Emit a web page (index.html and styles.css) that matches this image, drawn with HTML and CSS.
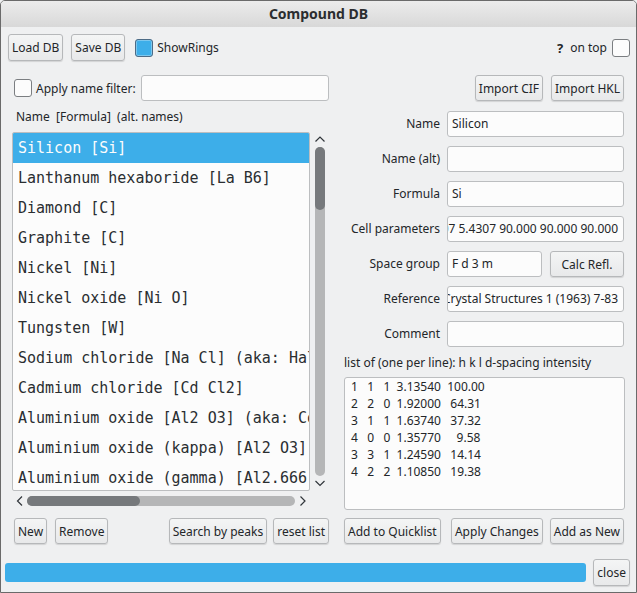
FILE: index.html
```html
<!DOCTYPE html>
<html>
<head>
<meta charset="utf-8">
<title>Compound DB</title>
<link rel="stylesheet" href="styles.css">
</head>
<body>
<div class="window">
  <div class="titlebar">Compound DB</div>

  <div class="toolbar">
    <button class="btn tall">Load DB</button>
    <button class="btn tall save">Save DB</button>
    <label class="check rings"><span class="box checked"></span>ShowRings</label>
    <span class="spacer"></span>
    <span class="help">?</span>
    <label class="check ontop">on top<span class="box"></span></label>
  </div>

  <div class="main">
    <div class="left">
      <div class="filter-row">
        <label class="check filter"><span class="box"></span>Apply name filter:</label>
        <div class="field filter-input"></div>
      </div>
      <div class="list-head">Name&nbsp; [Formula]&nbsp; (alt. names)</div>
      <div class="list-area">
        <div class="listbox">
          <div class="item selected">Silicon [Si]</div>
          <div class="item">Lanthanum hexaboride [La B6]</div>
          <div class="item">Diamond [C]</div>
          <div class="item">Graphite [C]</div>
          <div class="item">Nickel [Ni]</div>
          <div class="item">Nickel oxide [Ni O]</div>
          <div class="item">Tungsten [W]</div>
          <div class="item">Sodium chloride [Na Cl] (aka: Halite)</div>
          <div class="item">Cadmium chloride [Cd Cl2]</div>
          <div class="item">Aluminium oxide [Al2 O3] (aka: Corundum)</div>
          <div class="item">Aluminium oxide (kappa) [Al2 O3]</div>
          <div class="item">Aluminium oxide (gamma) [Al2.666 O4]</div>
        </div>
        <div class="vscroll">
          <svg class="chev" width="12" height="14" viewBox="0 0 12 14"><polyline points="1.5,9.5 6,5 10.5,9.5" fill="none" stroke="#31363b" stroke-width="1.2"/></svg>
          <div class="vtrack"><div class="vthumb"></div></div>
          <svg class="chev" width="12" height="14" viewBox="0 0 12 14"><polyline points="1.5,5 6,9.5 10.5,5" fill="none" stroke="#31363b" stroke-width="1.2"/></svg>
        </div>
      </div>
      <div class="hscroll">
        <svg class="hchev" width="15" height="14" viewBox="0 0 15 14"><polyline points="10,2.5 5.5,7 10,11.5" fill="none" stroke="#31363b" stroke-width="1.2"/></svg>
        <div class="htrack"><div class="hthumb"></div></div>
        <svg class="hchev" width="15" height="14" viewBox="0 0 15 14"><polyline points="5.5,2.5 10,7 5.5,11.5" fill="none" stroke="#31363b" stroke-width="1.2"/></svg>
      </div>
      <div class="btn-row">
        <button class="btn first">New</button>
        <button class="btn remove">Remove</button>
        <span class="spacer"></span>
        <button class="btn">Search by peaks</button>
        <button class="btn reset">reset list</button>
      </div>
    </div>

    <div class="right">
      <div class="import-row">
        <button class="btn">Import CIF</button>
        <button class="btn hkl-btn">Import HKL</button>
      </div>
      <div class="form">
        <div class="form-row"><span class="lbl">Name</span><div class="field">Silicon</div></div>
        <div class="form-row"><span class="lbl">Name (alt)</span><div class="field"></div></div>
        <div class="form-row"><span class="lbl">Formula</span><div class="field">Si</div></div>
        <div class="form-row"><span class="lbl">Cell parameters</span><div class="field tail"><span>5.4307 5.4307 5.4307 90.000 90.000 90.000</span></div></div>
        <div class="form-row"><span class="lbl">Space group</span><div class="split"><div class="field sg">F d 3 m</div><button class="btn calc">Calc Refl.</button></div></div>
        <div class="form-row"><span class="lbl">Reference</span><div class="field tail"><span>Wyckoff, Crystal Structures 1 (1963) 7-83</span></div></div>
        <div class="form-row"><span class="lbl">Comment</span><div class="field"></div></div>
      </div>
      <div class="hkl-label">list of (one per line): h k l d-spacing intensity</div>
      <div class="hkl"><div class="line">1   1   1  3.13540  100.00</div><div class="line">2   2   0  1.92000   64.31</div><div class="line">3   1   1  1.63740   37.32</div><div class="line">4   0   0  1.35770     9.58</div><div class="line">3   3   1  1.24590   14.14</div><div class="line">4   2   2  1.10850   19.38</div></div>
      <div class="btn-row">
        <button class="btn quick">Add to Quicklist</button>
        <button class="btn apply">Apply Changes</button>
        <button class="btn addnew">Add as New</button>
      </div>
    </div>
  </div>

  <div class="statusbar">
    <div class="progress"></div>
    <button class="btn close">close</button>
  </div>
</div>
</body>
</html>
```
FILE: styles.css
```css
html, body {
  margin: 0;
  padding: 0;
  background: #eff0f1;
}

body {
  font-family: "Noto Sans", "Open Sans", sans-serif;
  font-size: 12px;
  color: #232629;
}

.window {
  width: 637px;
  height: 593px;
  box-sizing: border-box;
  border: 1px solid #6a6a6a;
  border-radius: 5px 5px 0 0;
  background: #eff0f1;
  display: flex;
  flex-direction: column;
  overflow: hidden;
}

.titlebar {
  height: 26px;
  line-height: 26px;
  text-align: center;
  font-weight: bold;
  font-size: 14px;
  color: #2b2d2f;
  background: linear-gradient(#ececec, #d8d8d8);
}

.btn {
  font-family: inherit;
  font-size: 12px;
  color: #232629;
  height: 26px;
  box-sizing: border-box;
  padding: 0 3px;
  margin: 0;
  border: 1px solid #b6b8ba;
  border-radius: 3px;
  background: linear-gradient(#f4f5f5, #e8e9ea);
  box-shadow: 0 1px 1px rgba(0, 0, 0, 0.12);
  white-space: nowrap;
}

.btn.tall {
  height: 27px;
}

.spacer {
  flex: 1;
}

.toolbar {
  margin-top: 7px;
  height: 27px;
  padding: 0 6px 0 7px;
  display: flex;
  align-items: center;
}

.save {
  margin-left: 8px;
}

.check {
  display: flex;
  align-items: center;
  gap: 4px;
  white-space: nowrap;
}

.box {
  width: 18px;
  height: 18px;
  box-sizing: border-box;
  border: 1px solid #7b7e81;
  border-radius: 3px;
  background: #fcfcfc;
}

.box.checked {
  border-color: #4d6b85;
  background: #3daee9;
  box-shadow: inset 0 0 0 1px #7cc7ee;
}

.rings {
  margin-left: 10px;
}

.help {
  font-weight: bold;
  font-size: 13px;
  margin-right: 7px;
}

.ontop {
  gap: 5px;
}

.main {
  margin-top: 14px;
  height: 469px;
  padding-left: 11px;
  display: flex;
}

.left {
  width: 318px;
  display: flex;
  flex-direction: column;
}

.filter-row {
  height: 26px;
  display: flex;
  align-items: center;
}

.filter {
  margin-left: 2px;
}

.field {
  height: 26px;
  box-sizing: border-box;
  border: 1px solid #bcbec0;
  border-radius: 3px;
  background: #fcfcfc;
  padding: 0 4px;
  line-height: 24px;
  white-space: nowrap;
  overflow: hidden;
}

.filter-input {
  margin-left: auto;
  width: 188px;
  margin-right: 1px;
}

.list-head {
  margin-top: 8px;
  height: 16px;
  line-height: 16px;
  padding-left: 4px;
}

.list-area {
  margin-top: 7px;
  height: 359px;
  display: flex;
}

.listbox {
  width: 298px;
  height: 359px;
  box-sizing: border-box;
  border: 1px solid #bcbec0;
  border-radius: 2px;
  background: #fcfcfc;
  overflow: hidden;
}

.item {
  height: 30px;
  line-height: 30px;
  padding-left: 5px;
  font-family: "DejaVu Sans Mono", "Liberation Mono", monospace;
  font-size: 15px;
  white-space: nowrap;
  color: #2a2e31;
}

.item.selected {
  background: #3daee9;
  color: #fcfcfc;
}

.vscroll {
  width: 20px;
  display: flex;
  flex-direction: column;
  align-items: center;
}

.chev {
  display: block;
  flex: none;
}

.vtrack {
  margin-top: 1px;
  width: 10px;
  height: 329px;
  border-radius: 5px;
  background: #b5b6b7;
}

.vthumb {
  height: 63px;
  border-radius: 5px;
  background: #76797c;
}

.hscroll {
  height: 20px;
  width: 298px;
  display: flex;
  align-items: center;
}

.hchev {
  display: block;
  flex: none;
}

.htrack {
  width: 268px;
  height: 10px;
  border-radius: 5px;
  background: #b5b6b7;
}

.hthumb {
  width: 113px;
  height: 10px;
  border-radius: 5px;
  background: #76797c;
}

.btn-row {
  margin-top: 7px;
  height: 26px;
  display: flex;
  align-items: center;
}

.first {
  margin-left: 2px;
}

.remove {
  margin-left: 8px;
}

.reset {
  margin-left: 6px;
  margin-right: 1px;
}

.right {
  margin-left: 10px;
  width: 285px;
  display: flex;
  flex-direction: column;
}

.import-row {
  height: 26px;
  display: flex;
  justify-content: flex-end;
  gap: 8px;
  padding-right: 1px;
}

.form {
  margin-top: 10px;
  display: flex;
  flex-direction: column;
  gap: 9px;
}

.form-row {
  display: grid;
  grid-template-columns: 100px 177px;
  column-gap: 7px;
  height: 26px;
}

.lbl {
  text-align: right;
  line-height: 26px;
  white-space: nowrap;
}

.tail {
  display: flex;
  justify-content: flex-end;
  padding-right: 5px;
}

.tail span {
  flex: none;
}

.split {
  display: flex;
  justify-content: space-between;
}

.sg {
  width: 95px;
}

.calc {
  width: 74px;
}

.hkl-label {
  margin-top: 8px;
  height: 16px;
  line-height: 16px;
  padding-left: 4px;
  white-space: nowrap;
}

.hkl {
  margin-top: 6px;
  margin-left: 4px;
  height: 133px;
  box-sizing: border-box;
  border: 1px solid #bcbec0;
  border-radius: 3px;
  background: #fcfcfc;
  padding: 0 6px;
}

.line {
  height: 17px;
  line-height: 17px;
  white-space: pre;
}

.right .btn-row {
  margin-top: 8px;
}

.quick {
  margin-left: 4px;
}

.apply {
  margin-left: auto;
}

.addnew {
  margin-left: 7px;
  margin-right: 1px;
}

.statusbar {
  margin-top: 15px;
  height: 27px;
  padding: 0 6px 0 4px;
  display: flex;
  align-items: center;
}

.progress {
  flex: 1;
  height: 19px;
  border-radius: 3px;
  background: #3daee9;
}

.close {
  margin-left: 7px;
  height: 27px;
}
```
